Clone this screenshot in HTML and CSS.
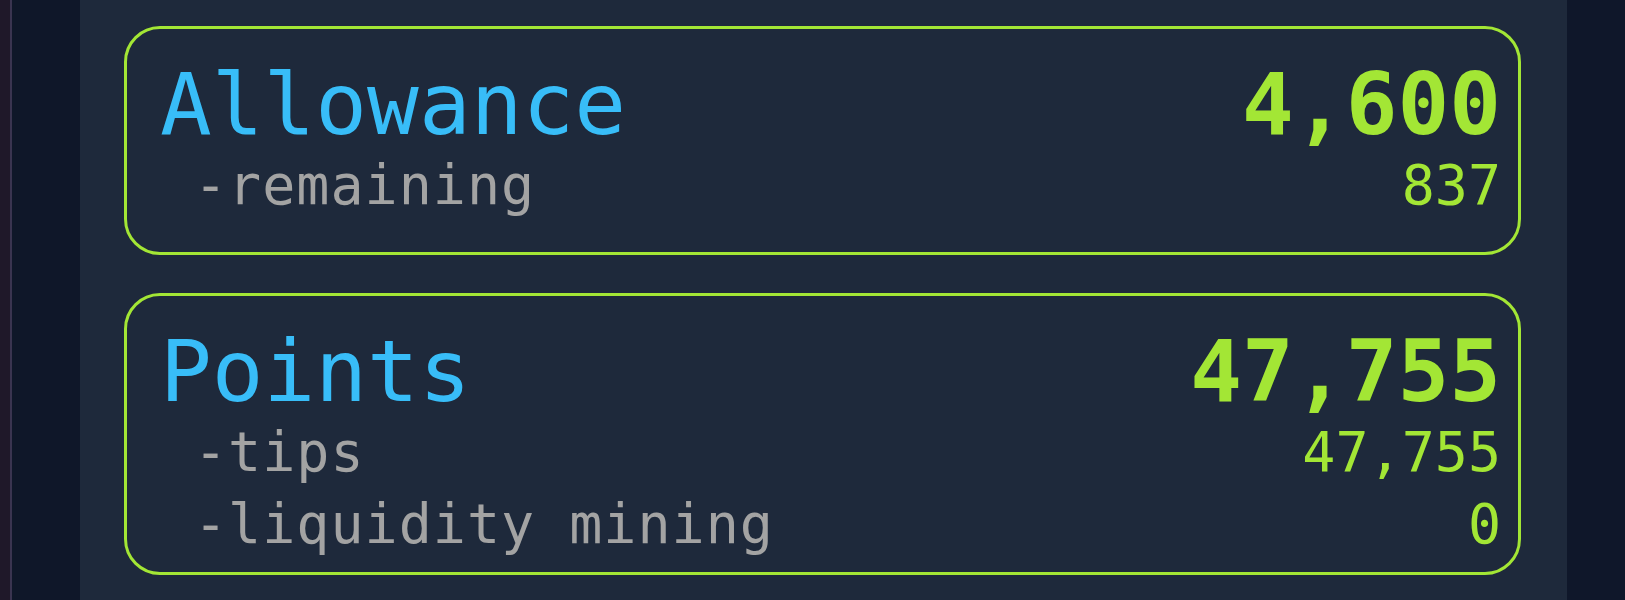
FILE: index.html
```html
<!DOCTYPE html>
<html lang="en">
<head>
  <meta charset="UTF-8" />
  <meta name="viewport" content="width=device-width, initial-scale=1.0"/>
  <title>Balance</title>
  <link rel="stylesheet" href="styles.css">
</head>
<body>

  <div class="side-rail"></div>
  <div class="gutter"></div>

  <main class="panel">
    <section class="card">
      <div class="row head">
        <span class="title">Allowance</span>
        <span class="total">4,600</span>
      </div>
      <div class="row">
        <span class="label">-remaining</span>
        <span class="amount">837</span>
      </div>
    </section>

    <section class="card">
      <div class="row head">
        <span class="title">Points</span>
        <span class="total">47,755</span>
      </div>
      <div class="row">
        <span class="label">-tips</span>
        <span class="amount">47,755</span>
      </div>
      <div class="row">
        <span class="label">-liquidity mining</span>
        <span class="amount">0</span>
      </div>
    </section>
  </main>

</body>
</html>
```

FILE: styles.css
```css
body {
  margin: 0;
  display: flex;
  min-height: 100vh;
  background: #0f172a;
  font-family: "DejaVu Sans Mono", "Liberation Mono", monospace;
}

.side-rail {
  width: 10px;
  background: #1f1829;
  border-right: 2px solid #3a3450;
}

.gutter {
  width: 68px;
  background: #0f1729;
}

.panel {
  width: 1487px;
  background: #1e293b;
  padding: 26px 46px 0 44px;
  box-sizing: border-box;
}

.card {
  border: 3px solid #a3e635;
  border-radius: 36px;
  padding: 30px 17px 12px 33px;
  min-height: 229px;
  box-sizing: border-box;
  margin-bottom: 38px;
}

.row {
  display: flex;
  justify-content: space-between;
  align-items: baseline;
  font-size: 55px;
  line-height: 72px;
}

.row.head {
  font-size: 86px;
  line-height: 90px;
}

.title { color: #38bdf8; }

.total {
  color: #a3e635;
  font-weight: bold;
}

.label {
  color: #a3a3a3;
  padding-left: 34px;
  letter-spacing: 1px;
}

.amount { color: #a3e635; }
```
